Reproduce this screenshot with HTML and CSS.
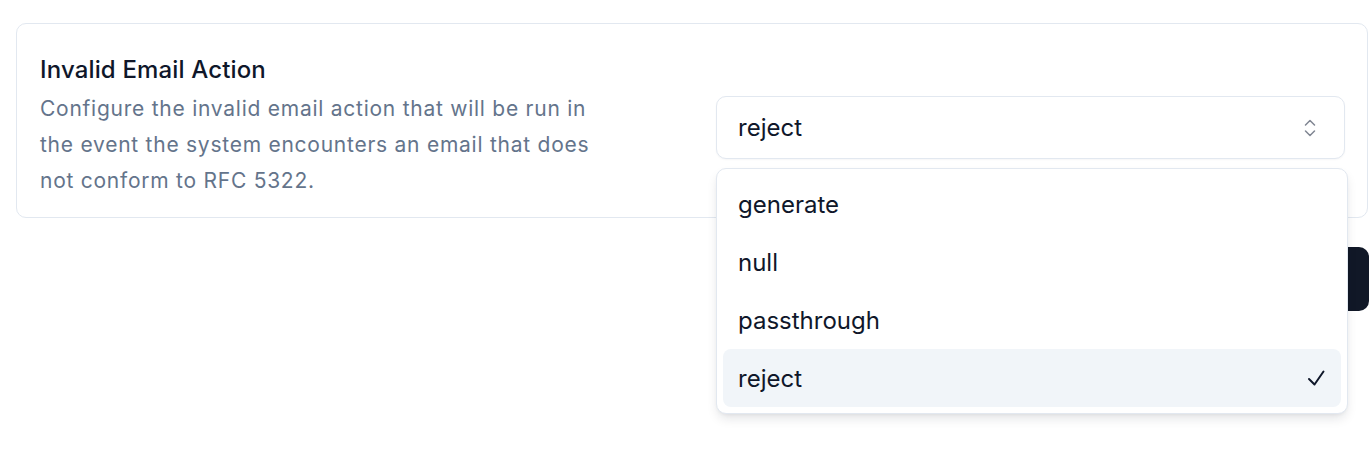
FILE: index.html
```html
<!DOCTYPE html>
<html lang="en">
<head>
<meta charset="utf-8">
<title>Invalid Email Action</title>
<link rel="stylesheet" href="styles.css">
</head>
<body>
<main class="page">
  <section class="card">
    <div class="card-text">
      <h2 class="card-title">Invalid Email Action</h2>
      <p class="card-desc">Configure the invalid email action that will be run in the event the system encounters an email that does not conform to RFC 5322.</p>
    </div>
    <div class="select-wrap">
      <button class="select-trigger" type="button">
        <span class="select-value">reject</span>
        <svg class="chevrons" viewBox="0 0 12 18" width="12" height="18" fill="none" stroke="currentColor" stroke-width="1.5" stroke-linecap="round" stroke-linejoin="round"><path d="M1.5 6 6 1.5 10.5 6"/><path d="M1.5 12 6 16.5 10.5 12"/></svg>
      </button>
      <ul class="select-menu" role="listbox">
        <li class="option">generate</li>
        <li class="option">null</li>
        <li class="option">passthrough</li>
        <li class="option selected">reject
          <svg class="check" viewBox="0 0 18 16" width="18" height="16" fill="none" stroke="currentColor" stroke-width="2" stroke-linecap="round" stroke-linejoin="round"><path d="M2 9 7.5 14.5 16.5 1.5"/></svg>
        </li>
      </ul>
    </div>
  </section>
  <div class="actions">
    <button class="btn-primary" type="button">Save</button>
  </div>
</main>
</body>
</html>
```

FILE: styles.css
```css
* { box-sizing: border-box; }
html, body { margin: 0; height: 100%; background: #ffffff; }
body {
  font-family: Inter, "Noto Sans", "Liberation Sans", sans-serif;
  color: #0f172a;
  overflow: hidden;
}
.page {
  padding: 23px 4px 0 16px;
}
.card {
  display: flex;
  justify-content: space-between;
  align-items: flex-start;
  border: 1px solid #e2e8f0;
  border-radius: 10px;
  padding: 31px 22px 0 23px;
  height: 195px;
  background: #fff;
}
.card-text { width: 580px; }
.card-title {
  margin: 0;
  font-size: 24px;
  font-weight: 500;
  line-height: 30px;
  letter-spacing: 0.15px;
  color: #0f172a;
}
.card-desc {
  margin: 6px 0 0;
  font-size: 21px;
  line-height: 36px;
  color: #64748b;
  letter-spacing: 0.75px;
}
.select-wrap {
  position: relative;
  width: 629px;
  margin-top: 41px;
}
.select-trigger {
  display: flex;
  align-items: center;
  justify-content: space-between;
  width: 100%;
  height: 63px;
  padding: 0 28px 0 21px;
  border: 1px solid #e2e8f0;
  border-radius: 10px;
  background: #fff;
  font: inherit;
  font-size: 24px;
  color: #0f172a;
  box-shadow: 0 1px 2px rgba(15, 23, 42, 0.04);
}
.chevrons { color: #6b7280; opacity: 0.85; }
.select-menu {
  position: absolute;
  top: 72px;
  left: 0;
  width: 632px;
  margin: 0;
  padding: 6px;
  list-style: none;
  background: #fff;
  border: 1px solid #e2e8f0;
  border-radius: 10px;
  box-shadow: 0 6px 12px -2px rgba(15, 23, 42, 0.12), 0 2px 4px -2px rgba(15, 23, 42, 0.08);
  z-index: 10;
}
.option {
  display: flex;
  align-items: center;
  justify-content: space-between;
  height: 58px;
  padding: 0 16px 0 15px;
  border-radius: 8px;
  font-size: 24px;
  color: #0f172a;
}
.option.selected { background: #f1f5f9; }
.check { color: #0f172a; }
.actions {
  display: flex;
  justify-content: flex-end;
  margin-top: 29px;
}
.btn-primary {
  height: 64px;
  width: 120px;
  margin-right: -1px;
  border: none;
  border-radius: 10px;
  background: #111827;
  color: #fff;
  font: inherit;
  font-size: 20px;
  font-weight: 500;
}
```
